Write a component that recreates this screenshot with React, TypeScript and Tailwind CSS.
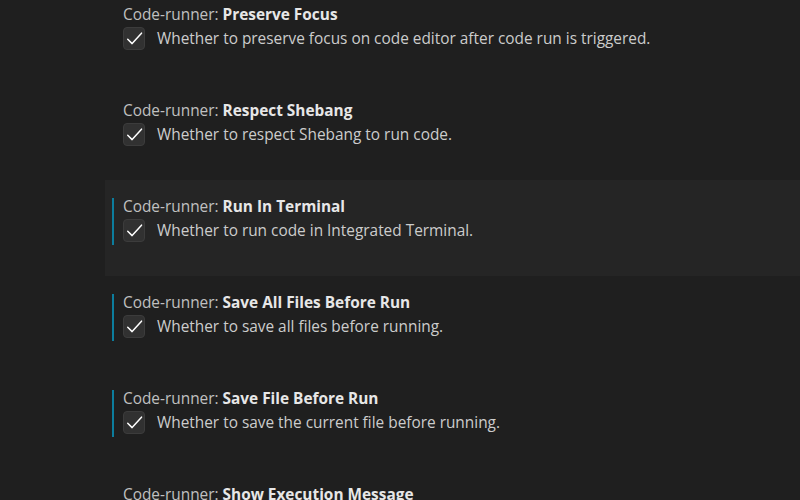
import React from "react";

type Item = { cat: string; name: string; desc: string; modified: boolean; hover?: boolean };

const items: Item[] = [
  { cat: "Code-runner: ", name: "Preserve Focus", desc: "Whether to preserve focus on code editor after code run is triggered.", modified: false },
  { cat: "Code-runner: ", name: "Respect Shebang", desc: "Whether to respect Shebang to run code.", modified: false },
  { cat: "Code-runner: ", name: "Run In Terminal", desc: "Whether to run code in Integrated Terminal.", modified: true, hover: true },
  { cat: "Code-runner: ", name: "Save All Files Before Run", desc: "Whether to save all files before running.", modified: true },
  { cat: "Code-runner: ", name: "Save File Before Run", desc: "Whether to save the current file before running.", modified: true },
  { cat: "Code-runner: ", name: "Show Execution Message", desc: "Whether to show extra execution message like [Running] ... and [Done] ...", modified: false },
];

function Check() {
  return (
    <div className="w-[22px] h-[23px] shrink-0 rounded-[4px] bg-[#313131] border border-[#3c3c3c] flex items-center justify-center">
      <svg width="19" height="19" viewBox="0 0 16 16" fill="none">
        <path d="M2.3 8.7 L6 12.3 L13.9 3.5" stroke="#ffffff" strokeWidth="1.25" strokeLinecap="round" strokeLinejoin="round" />
      </svg>
    </div>
  );
}

export default function App() {
  return (
    <div
      className="w-[800px] h-[500px] overflow-hidden bg-[#1f1f1f]"
      style={{ fontFamily: '"Open Sans", "Noto Sans", sans-serif' }}
    >
      <div className="pl-[105px] mt-[-12px]">
        {items.map((it, i) => (
          <div key={i} className={`h-[96px] pl-[7px] pt-[18px] flex ${it.hover ? "bg-[#252525]" : ""}`}>
            <div className={`w-[2px] h-[47px] shrink-0 ${it.modified ? "bg-[#0c7d9d]" : ""}`} />
            <div className="ml-[9px] flex flex-col">
              <div className="h-[18px] text-[15.4px] leading-[18px] whitespace-pre">
                <span className="text-[#c0c0c0]">{it.cat}</span>
                <span className="text-[#e7e7e7] font-bold">{it.name}</span>
              </div>
              <div className="mt-[3px] flex items-center">
                <Check />
                <span className="ml-[12px] text-[15.4px] text-[#cccccc] whitespace-nowrap">{it.desc}</span>
              </div>
            </div>
          </div>
        ))}
      </div>
    </div>
  );
}
